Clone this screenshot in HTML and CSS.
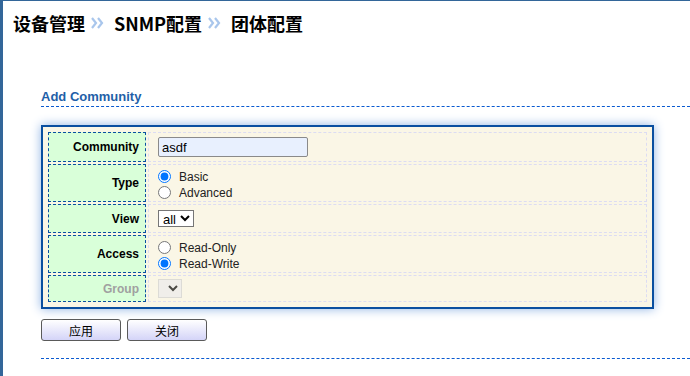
FILE: index.html
```html
<!DOCTYPE html>
<html lang="zh-CN">

<head>
  <meta charset="UTF-8" />
  <meta name="viewport" content="width=device-width, initial-scale=1.0" />
  <title>团体配置</title>
  <link rel="stylesheet" href="styles.css">
</head>

<body>
  <div class="crumbs">
    <span>设备管理</span>
    <svg class="sep" width="14" height="14" viewBox="0 0 14 14">
      <polyline points="2,2 6,7 2,12" />
      <polyline points="8,2 12,7 8,12" />
    </svg>
    <span>SNMP配置</span>
    <svg class="sep" width="14" height="14" viewBox="0 0 14 14">
      <polyline points="2,2 6,7 2,12" />
      <polyline points="8,2 12,7 8,12" />
    </svg>
    <span>团体配置</span>
  </div>

  <div class="section">
    <div class="sec-title">Add Community</div>

    <div class="panel">
      <table class="form">
        <tr class="r-comm">
          <th>Community</th>
          <td><input class="txt" type="text" value="asdf" /></td>
        </tr>
        <tr class="r-two">
          <th>Type</th>
          <td>
            <label class="opt"><input type="radio" name="type" checked />Basic</label>
            <label class="opt"><input type="radio" name="type" />Advanced</label>
          </td>
        </tr>
        <tr class="r-view">
          <th>View</th>
          <td>
            <select class="sel">
              <option>all</option>
            </select>
          </td>
        </tr>
        <tr class="r-two">
          <th>Access</th>
          <td>
            <label class="opt"><input type="radio" name="access" />Read-Only</label>
            <label class="opt"><input type="radio" name="access" checked />Read-Write</label>
          </td>
        </tr>
        <tr class="r-group">
          <th class="off">Group</th>
          <td><select class="sel sel-empty" disabled></select></td>
        </tr>
      </table>
    </div>

    <div class="actions">
      <button class="btn">应用</button>
      <button class="btn">关闭</button>
    </div>

    <div class="rule"></div>
  </div>
</body>

</html>
```

FILE: styles.css
```css
* {
  margin: 0;
  padding: 0;
  box-sizing: border-box;
}

html,
body {
  width: 100%;
  height: 100%;
}

body {
  background: #fff;
  border-left: 3px solid #336699;
  border-top: 1px solid #336699;
  font-family: "Liberation Sans", Arial, "Noto Sans CJK SC", sans-serif;
  font-size: 12px;
  color: #000;
  overflow: hidden;
}

/* breadcrumb */
.crumbs {
  display: flex;
  align-items: center;
  padding: 9px 0 0 10px;
  height: 34px;
  font-family: "Noto Sans CJK SC", sans-serif;
  font-size: 18px;
  font-weight: bold;
  line-height: 24px;
}

.crumbs .sep {
  margin: 0 10px 0 5px;
  fill: none;
  stroke: #a9c6ec;
  stroke-width: 2.2;
}

/* section */
.section {
  margin: 54px 0 0 38px;
}

.sec-title {
  font-size: 13px;
  font-weight: bold;
  line-height: 16px;
  color: #1f5fa8;
  padding-bottom: 1px;
  border-bottom: 1px dashed #0a5ad0;
}

.panel {
  width: 613px;
  margin-top: 18px;
  padding: 3px;
  background: #faf6e6;
  border: 2px solid #0a4fa0;
  box-shadow: 0 0 10px #8fb3e4;
}

.form {
  width: 100%;
  border-collapse: separate;
  border-spacing: 2px;
}

.form th {
  width: 98px;
  padding-right: 6px;
  text-align: right;
  font-weight: bold;
  background: #d9ffd9;
  border: 1px dashed #0a4fa0;
}

.form th.off {
  color: #a0a0a0;
}

.form td {
  padding-left: 4px;
  border: 1px dashed #dcdcf2;
}

.r-comm {
  height: 30px;
}

.r-two {
  height: 38px;
}

.r-two td {
  padding-top: 3px;
}

.r-view {
  height: 29px;
}

.r-group {
  height: 27px;
}

.txt {
  display: block;
  width: 150px;
  height: 20px;
  margin-left: 5px;
  padding: 0 3px;
  border: 1px solid #8a8a8a;
  border-radius: 2px;
  background: #e8f0fe;
  font-family: "Liberation Sans", Arial, sans-serif;
  font-size: 13px;
  color: #000;
}

.opt {
  display: flex;
  align-items: center;
  height: 16px;
  color: #222;
}

.opt input {
  width: 13px;
  height: 13px;
  margin: 0 8px 0 5px;
}

.sel {
  display: block;
  margin-left: 5px;
  height: 17px;
  font-family: "Liberation Sans", Arial, sans-serif;
  font-size: 13px;
  color: #000;
  background: #fff;
  border: 1px solid #767676;
}

.sel-empty {
  width: 24px;
  height: 19px;
  background: #ececec;
  border-color: #d0d0d0;
}

/* buttons */
.actions {
  display: flex;
  gap: 6px;
  margin-top: 10px;
}

.btn {
  width: 80px;
  height: 22px;
  border: 1px solid #5a5a5a;
  border-radius: 3px;
  background: linear-gradient(#ffffff, #d4d4f8);
  font-family: "Noto Sans CJK SC", sans-serif;
  font-size: 12px;
  color: #000;
}

.rule {
  margin-top: 17px;
  border-top: 1px dashed #0a5ad0;
}
```
